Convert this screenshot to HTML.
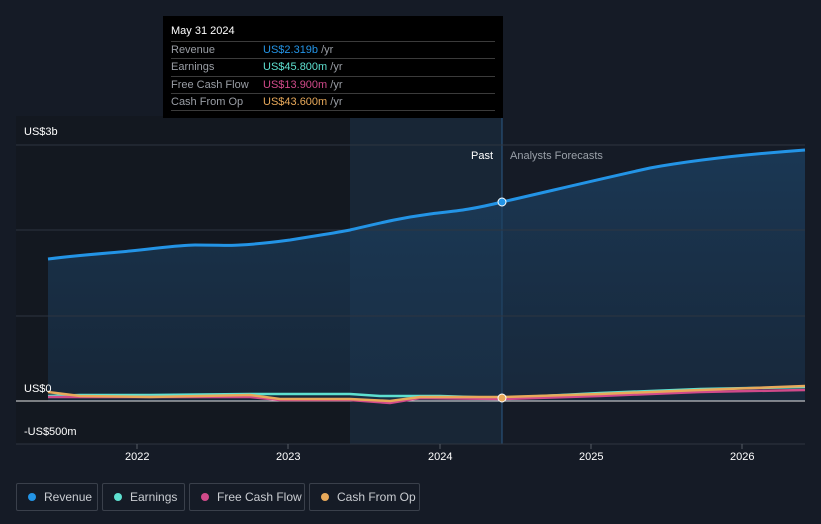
<!DOCTYPE html>
<html><head><style>
body{margin:0;width:821px;height:524px;background:#151b26;font-family:"Liberation Sans",sans-serif;overflow:hidden;position:relative}
.t{position:absolute;font-size:11px;color:#fff}
.leg{position:absolute;top:483px;height:28px;border:1px solid #3a404b;border-radius:2px;box-sizing:border-box;color:#c9ccd1;font-size:12px;line-height:26px;padding-left:27px}
.leg i{position:absolute;left:11px;top:9px;width:8px;height:8px;border-radius:50%}
.tip{position:absolute;left:163px;top:16px;width:340px;height:102px;background:#000}
.row{position:absolute;left:8px;width:324px;height:17px;border-top:1px solid #3b3b3b;font-size:11px;color:#9a9ea5;line-height:17px}
.row span{position:absolute;left:92px}
</style></head><body>
<svg width="821" height="524" style="position:absolute;left:0;top:0">
<defs><linearGradient id="g" x1="0" y1="0" x2="0" y2="1"><stop offset="0" stop-color="#1d4468" stop-opacity=".7"/><stop offset="1" stop-color="#1a3550" stop-opacity=".5"/></linearGradient></defs>
<rect x="16" y="116" width="334" height="328" fill="#131820"/>
<rect x="350" y="116" width="152" height="328" fill="#182636"/>
<line x1="502" y1="116" x2="502" y2="444" stroke="#2a5a85" stroke-width="1"/>
<path d="M48,259 C80,255 110,253 130,251 C160,248 180,245 195,245 C220,245 230,246 240,245 C260,244 275,242 290,240 C320,235 335,233 350,230 C380,223 400,218 430,214 C455,211 470,210 502,202 C550,191 600,179 650,168 C700,159 750,154 805,150 L805,401 L48,401 Z" fill="url(#g)"/>
<g stroke="#2e3540" stroke-width="1"><line x1="16" y1="145" x2="805" y2="145"/><line x1="16" y1="230" x2="805" y2="230"/><line x1="16" y1="316" x2="805" y2="316"/><line x1="16" y1="444" x2="805" y2="444"/></g>
<line x1="16" y1="401" x2="805" y2="401" stroke="#e6e6e6" stroke-width="1"/>
<g stroke="#555b64"><line x1="137" y1="444" x2="137" y2="449"/><line x1="288" y1="444" x2="288" y2="449"/><line x1="440" y1="444" x2="440" y2="449"/><line x1="591" y1="444" x2="591" y2="449"/><line x1="742" y1="444" x2="742" y2="449"/></g>
<path d="M48,259 C80,255 110,253 130,251 C160,248 180,245 195,245 C220,245 230,246 240,245 C260,244 275,242 290,240 C320,235 335,233 350,230 C380,223 400,218 430,214 C455,211 470,210 502,202 C550,191 600,179 650,168 C700,159 750,154 805,150" fill="none" stroke="#2394e6" stroke-width="3"/>
<path d="M48,396 L80,395 L150,395 L250,394 L350,394 L380,396 L440,396 L502,398 L600,393 L700,389 L805,387" fill="none" stroke="#5ee0d0" stroke-width="2.5"/>
<path d="M48,397 L100,397 L250,397 L280,400 L350,400 L390,403 L420,398 L502,399 L600,396 L700,392 L805,390" fill="none" stroke="#d04a8a" stroke-width="2.5"/>
<path d="M48,392 L80,396 L150,397 L250,395 L280,399 L350,399 L390,401 L420,397 L502,397 L600,394 L700,390 L805,386" fill="none" stroke="#e8a95a" stroke-width="2.5"/>
<circle cx="502" cy="202" r="4" fill="#2394e6" stroke="#fff" stroke-width="1"/>
<circle cx="502" cy="398" r="4" fill="#e8a95a" stroke="#fff" stroke-width="1"/>
</svg>
<div class="t" style="left:24px;top:126px">US$3b</div>
<div class="t" style="left:24px;top:383px">US$0</div>
<div class="t" style="left:24px;top:426px">-US$500m</div>
<div class="t" style="left:471px;top:150px">Past</div>
<div class="t" style="left:510px;top:150px;color:#9aa0a8">Analysts Forecasts</div>
<div class="t" style="left:125px;top:451px">2022</div>
<div class="t" style="left:276px;top:451px">2023</div>
<div class="t" style="left:428px;top:451px">2024</div>
<div class="t" style="left:579px;top:451px">2025</div>
<div class="t" style="left:730px;top:451px">2026</div>
<div class="tip">
<div class="t" style="left:8px;top:9px">May 31 2024</div>
<div class="row" style="top:25px">Revenue<span><b style="font-weight:normal;color:#2394e6">US$2.319b</b> /yr</span></div>
<div class="row" style="top:42px">Earnings<span><b style="font-weight:normal;color:#5ee0d0">US$45.800m</b> /yr</span></div>
<div class="row" style="top:60px">Free Cash Flow<span><b style="font-weight:normal;color:#d04a8a">US$13.900m</b> /yr</span></div>
<div class="row" style="top:77px">Cash From Op<span><b style="font-weight:normal;color:#e8a95a">US$43.600m</b> /yr</span></div>
<div class="row" style="top:94px;height:0"></div>
</div>
<div class="leg" style="left:16px;width:82px"><i style="background:#2394e6"></i>Revenue</div>
<div class="leg" style="left:102px;width:83px"><i style="background:#5ee0d0"></i>Earnings</div>
<div class="leg" style="left:189px;width:116px"><i style="background:#d04a8a"></i>Free Cash Flow</div>
<div class="leg" style="left:309px;width:111px"><i style="background:#e8a95a"></i>Cash From Op</div>
</body></html>
